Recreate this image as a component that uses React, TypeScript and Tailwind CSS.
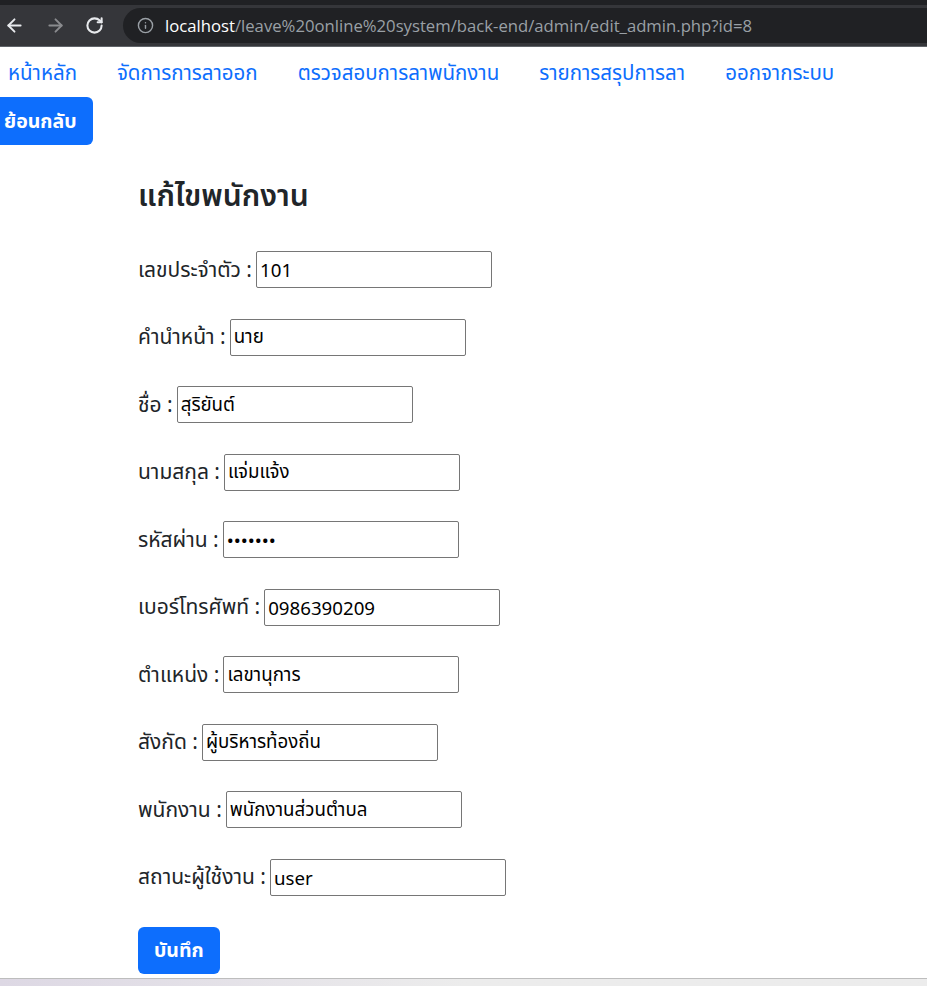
import { ArrowLeft, ArrowRight, RotateCw, Info } from 'lucide-react';

const fields = [
    { label: 'เลขประจำตัว', value: '101', type: 'text' },
    { label: 'คำนำหน้า', value: 'นาย', type: 'text' },
    { label: 'ชื่อ', value: 'สุริยันต์', type: 'text' },
    { label: 'นามสกุล', value: 'แจ่มแจ้ง', type: 'text' },
    { label: 'รหัสผ่าน', value: '1234567', type: 'password' },
    { label: 'เบอร์โทรศัพท์', value: '0986390209', type: 'text' },
    { label: 'ตำแหน่ง', value: 'เลขานุการ', type: 'text' },
    { label: 'สังกัด', value: 'ผู้บริหารท้องถิ่น', type: 'text' },
    { label: 'พนักงาน', value: 'พนักงานส่วนตำบล', type: 'text' },
    { label: 'สถานะผู้ใช้งาน', value: 'user', type: 'text' },
];

const menu = ['หน้าหลัก', 'จัดการการลาออก', 'ตรวจสอบการลาพนักงาน', 'รายการสรุปการลา', 'ออกจากระบบ'];

export default function App() {
    return (
        <div className="flex h-[986px] w-[927px] flex-col overflow-hidden bg-white" style={{ fontFamily: "'Noto Sans', 'Noto Sans Thai', 'DejaVu Sans', sans-serif" }}>
            {/* browser bar */}
            <div className="h-[5px] bg-[#202124]" />
            <div className="flex h-[41px] items-center bg-[#35363a]">
                <div className="flex w-[123px] items-center">
                    <ArrowLeft className="ml-[4px] text-[#e8eaed]" size={21} strokeWidth={2.2} />
                    <ArrowRight className="ml-[20px] text-[#8a8b8e]" size={21} strokeWidth={2.2} />
                    <RotateCw className="ml-[19px] text-[#e8eaed]" size={19} strokeWidth={2.6} />
                </div>
                <div className="flex h-[35px] flex-1 items-center rounded-l-full bg-[#202124] pl-[14px] text-[16.7px]" style={{ fontFamily: "'Open Sans', sans-serif" }}>
                    <Info className="text-[#9aa0a6]" size={17} strokeWidth={2} />
                    <span className="ml-[11px] text-white">localhost</span>
                    <span className="text-[#9aa0a6]">/leave%20online%20system/back-end/admin/edit_admin.php?id=8</span>
                </div>
            </div>
            <div className="h-px bg-[#5f6368]" />

            {/* page */}
            <div className="flex-1">
                <nav className="flex h-[50px] items-center pl-[8px] text-[20.5px] text-[#0d6efd]">
                    {menu.map((m) => (
                        <a key={m} href="#" className="mr-[40px]">{m}</a>
                    ))}
                </nav>
                <button className="-ml-[12px] h-[48px] rounded-md bg-[#0d6efd] px-[16px] text-[19.5px] font-bold text-white">
                    ย้อนกลับ
                </button>

                <div className="pl-[138px]">
                    <h2 className="mt-[34px] text-[30px] font-semibold leading-[31px] text-[#212529]">แก้ไขพนักงาน</h2>
                    <form className="mt-[41px] flex flex-col gap-[30.5px]">
                        {fields.map((f) => (
                            <div key={f.label} className="flex h-[37px] items-center text-[21px] text-[#212529]">
                                <span>{f.label} :</span>
                                <input
                                    type={f.type}
                                    defaultValue={f.value}
                                    className="ml-[4px] h-[37px] w-[236px] rounded-[2px] border border-[#767676] px-[3px] text-[18.7px] text-black"
                                />
                            </div>
                        ))}
                    </form>
                    <button className="mt-[31px] h-[47px] rounded-md bg-[#0d6efd] px-[16px] text-[19.5px] font-bold text-white">
                        บันทึก
                    </button>
                </div>
            </div>

            <div className="h-px bg-[#bdbdbd]" />
            <div className="h-[7px] bg-gradient-to-r from-[#ddd8e4] via-[#ececec] to-[#ececec]" />
        </div>
    );
}
